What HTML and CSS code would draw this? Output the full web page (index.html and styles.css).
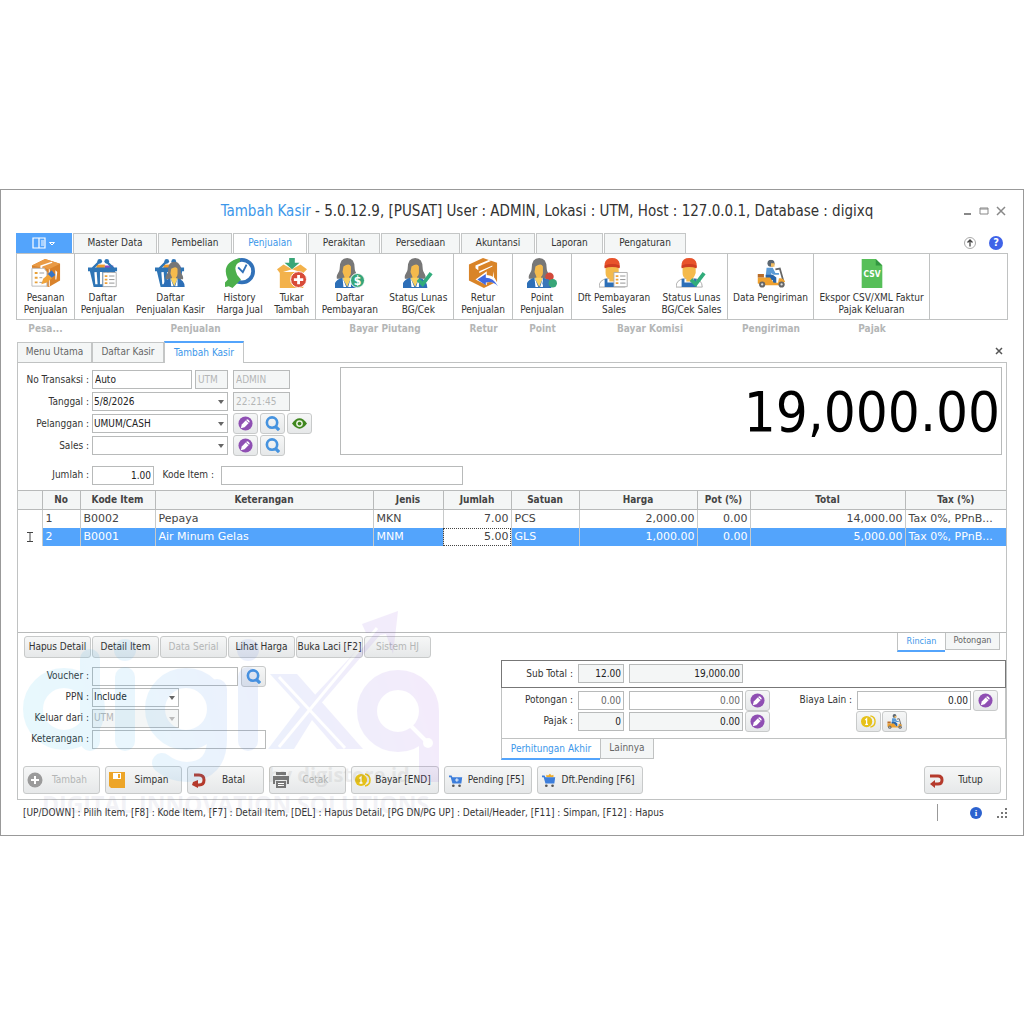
FILE: index.html
```html
<!DOCTYPE html>
<html lang="id">
<head>
<meta charset="utf-8">
<meta name="viewport" content="width=device-width, initial-scale=1">
<title>Tambah Kasir</title>
<link rel="stylesheet" href="styles.css">
</head>
<body>
<svg class="sprite" aria-hidden="true">
  <defs>
    <linearGradient id="brand" gradientUnits="userSpaceOnUse" x1="22" x2="440" y1="760" y2="640"><stop offset="0" stop-color="#22c4f2"/><stop offset=".3" stop-color="#35a9f4"/><stop offset=".55" stop-color="#4878ea"/><stop offset="1" stop-color="#a040d8"/></linearGradient>
  </defs>
  <symbol id="box" viewBox="0 0 32 32">
    <path fill="#d9822b" d="M1 8 15 1l16 5v18l-12 7L2 26z"/><path fill="#e99a45" d="M1 8 15 1l16 5-12 6z"/><path fill="#fff" d="m10 8 12-4 1 1-11 4v3l-2-1zM19 12h1v18h-1zM26 13l2 2-1 8h-1z"/>
    <path fill="#fff" stroke="#b9b9b9" d="M1 11h13l3 4v15H1z"/><path stroke="#e8a13a" stroke-width="2" d="M4 16h3m-3 5h3m-3 5h3"/><path stroke="#999" d="M9 16h5m-5 5h3m-3 5h5"/>
    <path fill="#f0a33a" d="m11 28 2-6 6-5 4 4-6 5z"/><path fill="#3474c8" d="m18 17 4-4 4 5-4 3z"/>
  </symbol>
  <symbol id="basket" viewBox="0 0 32 32">
    <path fill="#ee9b2e" d="M9 7h9v5H9z"/><path fill="#8b4bc0" d="M18 8h9v3h-9z"/><path fill="none" stroke="#2e75b6" stroke-width="2.500" d="M5 11 12 4m15 7L20 4"/><circle cx="12.500" cy="3.500" r="2.500" fill="#2e75b6"/><circle cx="20" cy="3.500" r="2.500" fill="#2e75b6"/>
    <path fill="#2e75b6" d="M0 10h31v4h-2l-3 17H6L2 14H0z"/><path stroke="#fff" stroke-width="2.500" d="m8 15 1 13m5-13v13m5-13v13m5-13-1 13"/>
  </symbol>
  <symbol id="list" viewBox="0 0 18 18"><path fill="#fff" stroke="#aaa" d="M1 1h15v16H1z"/><path stroke="#efa23a" stroke-width="2" d="M3 5h3M3 9h3m-3 4h3"/><path stroke="#888" d="M8 5h6M8 9h6m-6 4h6"/></symbol>
  <symbol id="woman" viewBox="0 0 32 32">
    <path fill="#777" d="M7 11Q7 0 15 0t8 11c0 5 4 6 3 11H4c-1-5 3-6 3-11z"/><path fill="#f4ba4c" d="M11 9q6-4 8 0v6q0 4-2 5v6h-5v-6l-2-5z"/>
    <path fill="#2d6fb7" d="M1 32q0-9 9-11l5 8 4-8q9 2 9 11z"/><path fill="#f8d061" d="m10 21 5 10 4-10z"/><path fill="#fff" d="m10 21 4 10h-3zm9 0-3 10h3z"/>
  </symbol>
  <symbol id="man" viewBox="0 0 32 32">
    <path fill="#fff" stroke="#aaa" d="M1 31q0-8 9-9h10q9 1 9 9z"/><path fill="#f4ba4c" d="M8 9h14v7q-2 6-4 6v3h-6v-3q-4-1-4-6z"/><path fill="#e8532b" d="M7 10V6q1-6 8-6t8 6v4l-8-2z"/><path fill="#cf3e22" d="M7 8q8-3 16 0v3q-8-3-16 0z"/>
    <path fill="#2d6fb7" d="M7 31V22h3v4h10v-4h3v9z"/>
  </symbol>
  <symbol id="check" viewBox="0 0 18 18"><path fill="none" stroke="#31ac7b" stroke-width="4" d="m2 9 5 5L16 2"/></symbol>
  <symbol id="scooter" viewBox="0 0 32 32">
    <circle cx="16" cy="4" r="4" fill="#5b6670"/><path fill="#f2bd62" d="M16 4h4v4h-4z"/><path fill="#5a9ad6" d="M11 9h7l3 6h4v2h-6l-3-2 1 4h-7z"/><path fill="#2864a8" d="M10 17h8l4 3v7h-4v-4h-8z"/>
    <path fill="none" stroke="#666" stroke-width="2" d="m21 11 5-1 4 14"/><path fill="#efa12f" d="M1 20h14l4 6h5l1-5q5-1 7 4l-7 4H10L1 27z"/><circle cx="6" cy="28" r="3.500" fill="#666"/><circle cx="28" cy="28" r="3.500" fill="#666"/><circle cx="6" cy="28" r="1.300" fill="#ddd"/><circle cx="28" cy="28" r="1.300" fill="#ddd"/><path fill="#b86c28" d="M1 16h7v4H1z"/>
  </symbol>
  <symbol id="pen" viewBox="0 0 16 16"><circle cx="8" cy="8" r="7.500" fill="#8f4fb3"/><path fill="#fff" d="m3 13 1-4 5-5q1-1 2 0l1 1q1 1 0 2l-5 5z"/><path fill="none" stroke="#8f4fb3" d="m8.500 4.500 3 3"/></symbol>
  <symbol id="search" viewBox="0 0 16 16"><circle cx="7.500" cy="7" r="5.500" fill="none" stroke="#4693df" stroke-width="2.800"/><path stroke="#4693df" stroke-width="3.500" d="m11 11 4 4"/></symbol>
  <symbol id="eye" viewBox="0 0 16 16"><path fill="#3f871f" d="M0 8q8-11 16 0-8 11-16 0z"/><circle cx="8" cy="8" r="3.600" fill="#e7f1df"/><circle cx="8" cy="8" r="2" fill="#3f871f"/></symbol>
  <symbol id="coin" viewBox="0 0 16 16"><path fill="none" stroke="#e6c118" stroke-width="1.500" d="M10 2q5 1 5 6t-5 6"/><circle cx="6" cy="8" r="6" fill="#e6c118"/><path fill="none" stroke="#fff" stroke-width="1.300" d="M4.500 6.500 6 5v6M4.500 11h3"/></symbol>
  <symbol id="cart" viewBox="0 0 16 16"><path fill="#3d7edb" d="M0 2h3l1 2h11l-1 7H4L2 4H0z"/><circle cx="5" cy="13.500" r="1.500" fill="#555"/><circle cx="12" cy="13.500" r="1.500" fill="#555"/></symbol>
</svg>

<main class="window">
  <header class="titlebar">
    <h1><span>Tambah Kasir</span> - 5.0.12.9, [PUSAT] User : ADMIN, Lokasi : UTM, Host : 127.0.0.1, Database : digixq</h1>
    <div class="controls">
      <button aria-label="Minimize"><svg viewBox="0 0 10 10"><path fill="none" stroke="#888" stroke-width="2" d="M2 8h7"/></svg></button>
      <button aria-label="Maximize"><svg viewBox="0 0 10 10"><path fill="none" stroke="#888" d="M1 2h8v6H1zM1 3h8"/></svg></button>
      <button aria-label="Close"><svg viewBox="0 0 10 10"><path fill="none" stroke="#888" stroke-width="1.500" d="m1 1 8 8m0-8-8 8"/></svg></button>
    </div>
  </header>

  <nav class="menu">
    <button class="file" aria-label="File"><svg viewBox="0 0 24 12"><path fill="none" stroke="#fff" stroke-width="1.200" d="M1 1h12v10H1zM7 1v10M9 4h3M9 6h3M9 8h3"/><path fill="none" stroke="#fff" d="M17.500 5.500h5L20 8z"/></svg></button>
    <a href="#" class="t84">Master Data</a><a href="#" class="t74">Pembelian</a><a href="#" class="t74 on">Penjualan</a><a href="#" class="t72">Perakitan</a><a href="#" class="t78">Persediaan</a><a href="#" class="t74">Akuntansi</a><a href="#" class="t66">Laporan</a><a href="#" class="t82">Pengaturan</a>
    <div class="help">
      <button aria-label="Ciutkan"><svg viewBox="0 0 14 14"><circle cx="7" cy="7" r="5.500" fill="none" stroke="#aaa"/><path fill="none" stroke="#444" stroke-width="1.300" d="M7 10.500V4M4.500 6.500 7 4l2.500 2.500"/></svg></button>
      <button aria-label="Bantuan" class="q">?</button>
    </div>
  </nav>

  <section class="ribbon">
    <div class="group g58"><div class="tools">
      <button><svg><use href="#box"/></svg>Pesanan<br>Penjualan</button></div><h2>Pesa...</h2></div>
    <div class="group g241"><div class="tools">
      <button><svg viewBox="0 0 32 32"><use href="#basket"/><use href="#list" x="15" y="14" width="17" height="18"/></svg>Daftar<br>Penjualan</button>
      <button><svg viewBox="0 0 32 32"><use href="#basket"/><use href="#woman" x="8" y="3" width="27" height="29"/></svg>Daftar<br>Penjualan Kasir</button>
      <button><svg viewBox="0 0 32 32"><circle cx="18" cy="14" r="12" fill="#fff" stroke="#3171b8" stroke-width="4"/><path fill="#4caf4b" d="M16 0v4Q8 8 13 18l4 5-9 9-4-2-4 1v-5l3-3Q-5 5 16 0z"/><path fill="none" stroke="#3171b8" stroke-width="2" d="m14 10 5 5 4-8"/></svg>History<br>Harga Jual</button>
      <button><svg viewBox="0 0 32 32"><path fill="#f3b24b" d="M3 15h25v17H3zM0 12l7-5 9 5-13 4zm16 0 9-5 7 5-4 4z"/><path fill="#39a678" d="M13 0h6v5h5l-8 7-8-7h5z"/><circle cx="23" cy="23" r="8.500" fill="#d84b38" stroke="#fff"/><path stroke="#fff" stroke-width="3" d="M18 23h10m-5-5v10"/></svg>Tukar<br>Tambah</button></div><h2>Penjualan</h2></div>
    <div class="group g138"><div class="tools">
      <button><svg viewBox="0 0 32 32"><use href="#woman" x="-2" width="32" height="32"/><circle cx="24" cy="24" r="7.500" fill="#36a579" stroke="#fff"/><text x="24" y="29" class="dollar">$</text></svg>Daftar<br>Pembayaran</button>
      <button><svg viewBox="0 0 32 32"><use href="#woman" x="-2" width="32" height="32"/><use href="#check" x="14" y="14" width="18" height="18"/></svg>Status Lunas<br>BG/Cek</button></div><h2>Bayar Piutang</h2></div>
    <div class="group g58"><div class="tools">
      <button><svg viewBox="0 0 32 32"><path fill="#d98428" d="m1 7 15-7 15 5v20l-14 7L1 24z"/><path fill="#fff" d="m8 8 14-6 3 1-14 6v4L8 11zM27 14l1 8-2 2zM12 14l14-6v1l-14 7z"/><path fill="#fff" d="m8 23 12-9v4q10 0 12 12-5-6-12-4v3z"/><path fill="#4169e1" d="m10 23 9-6v4q8 0 13 9-6-6-13-4v3z"/></svg>Retur<br>Penjualan</button></div><h2>Retur</h2></div>
    <div class="group g58"><div class="tools">
      <button><svg viewBox="0 0 32 32"><use href="#woman" x="-2" width="32" height="32"/><circle cx="24" cy="20" r="4.500" fill="#d2493a"/><circle cx="21" cy="27" r="4.500" fill="#3b77b8"/><circle cx="27.500" cy="27" r="4.500" fill="#37a577"/></svg>Point<br>Penjualan</button></div><h2>Point</h2></div>
    <div class="group g156"><div class="tools">
      <button><svg viewBox="0 0 32 32"><use href="#man" x="-1" width="32" height="32"/><use href="#list" x="15" y="14" width="17" height="18"/></svg>Dft Pembayaran<br>Sales</button>
      <button><svg viewBox="0 0 32 32"><use href="#man" x="-1" width="32" height="32"/><use href="#check" x="14" y="14" width="18" height="18"/></svg>Status Lunas<br>BG/Cek Sales</button></div><h2>Bayar Komisi</h2></div>
    <div class="group g86"><div class="tools">
      <button><svg viewBox="-1 -2 34 34"><use href="#scooter" width="32" height="32"/></svg>Data Pengiriman</button></div><h2>Pengiriman</h2></div>
    <div class="group g117"><div class="tools">
      <button><svg viewBox="0 0 32 32"><path fill="#57bf59" d="M5 1h15l7 7v24H5z"/><path fill="#339741" d="M20 1v7h7z"/><text x="16" y="20" class="csv">CSV</text></svg>Ekspor CSV/XML Faktur<br>Pajak Keluaran</button></div><h2>Pajak</h2></div>
    <div class="group rest"><div class="tools"></div></div>
  </section>

  <nav class="doctabs">
    <a href="#" class="t75">Menu Utama</a><a href="#" class="t72">Daftar Kasir</a><a href="#" class="on">Tambah Kasir</a>
    <button aria-label="Tutup tab"><svg viewBox="0 0 8 8"><path stroke="#555" stroke-width="1.500" d="m1 1 6 6m0-6-6 6"/></svg></button>
  </nav>

  <section class="panel">
    <div class="entry">
      <form class="fields">
        <div class="row"><label for="no">No Transaksi :</label><input id="no" class="w100" value="Auto"><input class="w33" aria-label="Gudang" value="UTM" disabled><input class="w57 second" aria-label="User" value="ADMIN" disabled></div>
        <div class="row"><label for="tgl">Tanggal :</label><span class="combo w136"><select id="tgl"><option>5/8/2026</option></select></span><input class="w57 second" aria-label="Jam" value="22:21:45" disabled></div>
        <div class="row"><label for="plg">Pelanggan :</label><span class="combo w136"><select id="plg"><option>UMUM/CASH</option></select></span><span class="acts"><button type="button" class="ib" aria-label="Ubah"><svg><use href="#pen"/></svg></button><button type="button" class="ib" aria-label="Cari"><svg><use href="#search"/></svg></button><button type="button" class="ib" aria-label="Lihat"><svg><use href="#eye"/></svg></button></span></div>
        <div class="row"><label for="sales">Sales :</label><span class="combo w136"><select id="sales"><option></option></select></span><span class="acts"><button type="button" class="ib" aria-label="Ubah"><svg><use href="#pen"/></svg></button><button type="button" class="ib" aria-label="Cari"><svg><use href="#search"/></svg></button></span></div>
      </form>
      <output class="display">19,000.00</output>
    </div>
    <form class="row qty"><label for="jml">Jumlah :</label><input id="jml" class="w62 num" value="1.00"><label class="code" for="kode">Kode Item :</label><input id="kode" class="w242"></form>

    <div class="gridbox">
      <table>
        <colgroup><col class="c24"><col class="c38"><col class="c75"><col><col class="c70"><col class="c68"><col class="c68"><col class="c118"><col class="c53"><col class="c155"><col class="c100"></colgroup>
        <thead><tr><th></th><th>No</th><th>Kode Item</th><th>Keterangan</th><th>Jenis</th><th>Jumlah</th><th>Satuan</th><th>Harga</th><th>Pot (%)</th><th>Total</th><th>Tax (%)</th></tr></thead>
        <tbody>
          <tr><td></td><td>1</td><td>B0002</td><td>Pepaya</td><td>MKN</td><td class="num">7.00</td><td>PCS</td><td class="num">2,000.00</td><td class="num">0.00</td><td class="num">14,000.00</td><td>Tax 0%, PPnB...</td></tr>
          <tr class="sel"><td class="mark"><svg viewBox="0 0 6 10"><path fill="none" stroke="#444" d="M0 .5h6M3 1v8M0 9.500h6"/></svg></td><td>2</td><td>B0001</td><td>Air Minum Gelas</td><td>MNM</td><td class="num focus">5.00</td><td>GLS</td><td class="num">1,000.00</td><td class="num">0.00</td><td class="num">5,000.00</td><td>Tax 0%, PPnB...</td></tr>
        </tbody>
      </table>
    </div>

    <div class="toolbar">
      <div class="btns"><button class="btn">Hapus Detail</button><button class="btn">Detail Item</button><button class="btn" disabled>Data Serial</button><button class="btn">Lihat Harga</button><button class="btn">Buka Laci [F2]</button><button class="btn" disabled>Sistem HJ</button></div>
      <nav class="subtabs"><a href="#" class="on">Rincian</a><a href="#">Potongan</a></nav>
    </div>

    <div class="summary">
      <form class="fields extra">
        <div class="row"><label for="vc">Voucher :</label><input id="vc" class="w146"><button type="button" class="ib" aria-label="Cari voucher"><svg><use href="#search"/></svg></button></div>
        <div class="row"><label for="ppn">PPN :</label><span class="combo w87"><select id="ppn"><option>Include</option></select></span></div>
        <div class="row"><label for="kel">Keluar dari :</label><span class="combo w87 off"><select id="kel" disabled><option>UTM</option></select></span></div>
        <div class="row"><label for="ket">Keterangan :</label><input id="ket" class="w174"></div>
      </form>
      <div class="totals">
        <div class="sub row"><label for="st">Sub Total :</label><input id="st" class="w46 num ro" value="12.00" readonly><input class="w114 num ro" aria-label="Sub total" value="19,000.00" readonly></div>
        <div class="calc">
          <div class="row"><label for="pot">Potongan :</label><input id="pot" class="w46 num soft" value="0.00"><input class="w114 num soft" aria-label="Nilai potongan" value="0.00"><button class="ib" aria-label="Ubah potongan"><svg><use href="#pen"/></svg></button><span class="right"><label for="by">Biaya Lain :</label><input id="by" class="w114 num" value="0.00"><button class="ib" aria-label="Ubah biaya"><svg><use href="#pen"/></svg></button></span></div>
          <div class="row"><label for="pj">Pajak :</label><input id="pj" class="w46 num ro" value="0" readonly><input class="w114 num ro" aria-label="Nilai pajak" value="0.00" readonly><button class="ib" aria-label="Ubah pajak"><svg><use href="#pen"/></svg></button><span class="right pair"><button class="ib" aria-label="Bayar"><svg><use href="#coin"/></svg></button><button class="ib" aria-label="Pengiriman"><svg><use href="#scooter"/></svg></button></span></div>
        </div>
        <nav class="subtabs wide"><a href="#" class="on">Perhitungan Akhir</a><a href="#">Lainnya</a></nav>
      </div>
    </div>

    <div class="actions">
      <button class="btn big" disabled><svg viewBox="0 0 16 16"><circle cx="8" cy="8" r="7.500" fill="#9b9b9b"/><path stroke="#fff" stroke-width="2" d="M4 8h8M8 4v8"/></svg><span>Tambah</span></button>
      <button class="btn big"><svg viewBox="0 0 16 16"><path fill="#eda528" d="M0 0h16v16H2l-2-2z"/><path fill="#fff" d="M4 1h8v6H4z"/><path fill="#eda528" d="M9 2h2v4H9z"/></svg><span>Simpan</span></button>
      <button class="btn big"><svg viewBox="0 0 16 16"><path fill="none" stroke="#b53a2c" stroke-width="3" d="M3 3h5q5 0 5 5t-5 5H6"/><path fill="#b53a2c" d="M7 8v8l-6-3 1-3z"/></svg><span>Batal</span></button>
      <button class="btn big" disabled><svg viewBox="0 0 16 16"><path fill="#777" d="M3 0h10v3H3zM0 4h16v8h-2V8H2v4H0zm3 5h10v7H3z"/><path stroke="#fff" d="M5 11.500h6m-6 2h6"/></svg><span>Cetak</span></button>
      <button class="btn big w89"><svg><use href="#coin"/></svg><span>Bayar [END]</span></button>
      <button class="btn big w89"><svg viewBox="-1 -2 18 18"><use href="#cart" width="16" height="16"/><path stroke="#fff" d="M9 5v4M7 7h4"/></svg><span>Pending [F5]</span></button>
      <button class="btn big w106"><svg viewBox="-1 -2 18 18"><path fill="#efad2c" d="M5 4V1l2 1 2-2 2 2 2-1v3z"/><use href="#cart" width="16" height="16"/></svg><span>Dft.Pending [F6]</span></button>
      <button class="btn big last"><svg viewBox="0 0 16 16"><path fill="none" stroke="#b53a2c" stroke-width="3" d="M2 4h8q4 0 4 4t-4 4H6"/><path fill="#b53a2c" d="M7 8v8l-5-4z"/></svg><span>Tutup</span></button>
    </div>

    <svg class="watermark" viewBox="22 609 420 210" aria-hidden="true">
      <g fill="none" stroke="url(#brand)" stroke-width="20">
        <g stroke-linecap="round">
          <circle cx="64" cy="710" r="31"/><path d="M90 660v82M125 678v64M248 678v64"/>
          <circle cx="186" cy="710" r="31"/><path d="M217 690v50q0 32-30 33-14 0-25-9"/>
        </g>
        <circle cx="398" cy="712" r="31"/><path d="M429 712v71"/>
      </g>
      <g fill="url(#brand)">
        <circle cx="125" cy="651" r="11"/><circle cx="248" cy="651" r="11"/>
        <path d="M270 675h27l66 75h-26l-25-29-18 29h-26l32-42z"/>
        <path d="m318 708 62-72 6-1 7 20 5-43-36 13 4 9 8-1-61 65z"/>
      </g>
      <path stroke="#fff" stroke-width="4" d="m411 727 17 17"/><circle cx="428" cy="744" r="5" fill="#fff"/>
      <path fill="none" stroke="#fff" stroke-width="3" d="m279 678 66 71M279 748l98-119"/>
      <text class="by" x="268" y="783">by digistore.id</text>
      <text class="tag" x="42" y="814">DIGITAL INNOVATION SOLUTIONS</text>
    </svg>
  </section>

  <footer class="status">
    <p>[UP/DOWN] : Pilih Item, [F8] : Kode Item, [F7] : Detail Item, [DEL] : Hapus Detail, [PG DN/PG UP] : Detail/Header, [F11] : Simpan, [F12] : Hapus</p>
    <div class="tray"><span class="info">i</span></div>
    <svg class="grip" viewBox="0 0 12 12"><path fill="#777" d="M9 1h2v2H9zM9 5h2v2H9zM5 5h2v2H5zM9 9h2v2H9zM5 9h2v2H5zM1 9h2v2H1z"/></svg>
  </footer>
</main>
</body>
</html>
```
FILE: styles.css
```css
* { box-sizing: border-box; }
body {
  margin: 0;
  min-height: 100vh;
  display: flex;
  flex-direction: column;
  justify-content: center;
  background: #fff;
  color: #333;
  font: 10px/12px "DejaVu Sans Condensed", "DejaVu Sans", sans-serif;
}
h1, h2, p { margin: 0; }
a { color: inherit; text-decoration: none; }
button, input, select { font: inherit; color: inherit; margin: 0; padding: 0; }
button { border: 0; background: none; }
svg { display: block; }
.sprite { position: absolute; width: 0; height: 0; }

.window { border: 1px solid #999; background: #fff; padding: 0 15px; }

.titlebar { display: flex; align-items: center; height: 43px; }
.titlebar h1 { flex: 1; padding-left: 116px; text-align: center; font-size: 15px; line-height: 18px; font-weight: 400; white-space: nowrap; }
.titlebar h1 span { color: #3c97ea; }
.controls { display: flex; gap: 7px; padding-right: 2px; }
.controls button { width: 10px; height: 10px; }

.menu { display: flex; align-items: stretch; height: 20px; }
.menu a, .doctabs a { display: flex; align-items: center; justify-content: center; border: 1px solid #c4c6c6; border-bottom: 0; background: #f4f6f6; margin-right: 1px; }
.menu .file { width: 56px; background: #53a4fc; margin-right: 1px; display: flex; align-items: center; justify-content: center; }
.file svg { width: 24px; height: 12px; }
.menu .on { background: #fff; color: #3c97ea; }
.t84 { width: 84px; } .t74 { width: 74px; } .t75 { width: 75px; } .t72 { width: 72px; } .t78 { width: 79px; } .t66 { width: 67px; } .t82 { width: 82px; }
.help { margin-left: auto; padding-right: 5px; display: flex; align-items: center; gap: 12px; }
.help svg { width: 14px; height: 14px; }
.help .q { width: 14px; height: 14px; border-radius: 50%; background: #3f63e8; color: #fff; font-weight: 700; font-size: 11px; line-height: 14px; }

.ribbon { display: flex; }
.group .tools { display: flex; align-items: flex-start; height: 67px; border: 1px solid #c0c2c2; border-left: 0; padding-top: 4px; }
.group:first-child .tools { border-left: 1px solid #c0c2c2; }
.tools button { flex: 1 1 auto; white-space: nowrap; }
.tools svg { width: 30px; height: 30px; margin: 0 auto 4px; }
.group h2 { font-size: 10px; line-height: 18px; color: #b4b6b6; text-align: center; }
.dollar { fill: #fff; font-size: 13px; font-weight: 700; text-anchor: middle; }
.csv { fill: #fff; font-size: 9px; font-weight: 700; text-anchor: middle; }
.g58 { width: 59px; } .g241 { width: 241px; } .g138 { width: 138px; } .g156 { width: 156px; } .g86 { width: 86px; } .g117 { width: 116px; }
.rest { flex: 1; }

.doctabs { display: flex; align-items: flex-end; height: 24px; padding: 0 1px; color: #666; }
.doctabs a { height: 20px; margin: 0; }
.doctabs .on { width: 80px; height: 22px; margin-bottom: -1px; z-index: 1; border-top: 2px solid #53a4fc; background: #fff; color: #3c97ea; }
.doctabs button { width: 8px; height: 8px; margin: 0 4px 7px auto; }

.panel { position: relative; border: 1px solid #c0c2c2; margin: 0 1px; padding-bottom: 5px; }
.entry { display: flex; padding: 4px 4px 0 0; gap: 28px; }
.row { display: flex; align-items: center; height: 22px; }
.row label { width: 71px; margin-right: 3px; text-align: right; white-space: nowrap; }
.entry .fields { padding-top: 2px; }
.row input, .combo { height: 19px; border: 1px solid #b8baba; background: #fff; flex: none; }
.row input { padding: 0 2px; color: #222; }
.row input:disabled { background: #f4f6f6; color: #b4b6b6; }
.num { text-align: right; }
.row .ro { background: #f4f6f6; }
.row .soft { color: #666; }
.combo { position: relative; }
.combo select { appearance: none; width: 100%; height: 100%; border: 0; background: none; padding: 0 1px; color: #222; opacity: 1; }
.combo::after { content: ""; position: absolute; right: 3px; top: 7px; border: 3px solid transparent; border-top: 4px solid #666; border-bottom: 0; pointer-events: none; }
.off { background: #f4f6f6; }
.combo.off select { color: #b4b6b6; }
.combo.off::after { border-top-color: #bbb; }
.w33 { width: 33px; margin-left: 3px; } .w46 { width: 46px; } .w57 { width: 57px; } .w62 { width: 62px; } .w87 { width: 87px; } .w100 { width: 100px; } .w114 { width: 114px; } .w136 { width: 136px; } .w146 { width: 146px; } .w174 { width: 174px; } .w242 { width: 242px; }
.second, .acts { margin-left: 5px; }
.acts { display: flex; gap: 2px; }
.ib, .btn { border: 1px solid #c8caca; border-radius: 3px; background: linear-gradient(#f6f7f7, #e6e8e9); }
.ib { width: 25px; height: 21px; display: flex; align-items: center; justify-content: center; flex: none; }
.ib svg { width: 15px; height: 15px; }
.qty { height: 33px; padding-top: 4px; }
.row .code { width: 60px; margin-right: 7px; }
.display { flex: 1; height: 88px; border: 1px solid #b8baba; color: #000; text-align: right; font-size: 56px; line-height: 88px; padding-right: 1px; }

.gridbox { border-top: 1px solid #b8baba; border-bottom: 1px solid #b8baba; height: 143px; }
table { width: 100%; border-collapse: collapse; table-layout: fixed; font: 11px/13px "DejaVu Sans", sans-serif; color: #444; }
th { height: 19px; padding: 0; font: 700 10px/12px "DejaVu Sans Condensed", sans-serif; background: #f4f6f6; border-right: 1px solid #b8baba; border-bottom: 1px solid #b8baba; }
td { height: 18px; padding: 0 2px 0 3px; border-right: 1px solid #c8caca; white-space: nowrap; overflow: hidden; }
th:last-child, td:last-child { border-right: 0; }
.sel td { background: #53a4fc; color: #fff; }
.sel .mark { background: #fff; }
.mark svg { width: 6px; height: 10px; margin: 0 auto; }
.sel .focus { background: #fff; color: #444; outline: 1px dotted #444; outline-offset: -1px; }
.c24 { width: 24px; } .c38 { width: 38px; } .c75 { width: 75px; } .c70 { width: 70px; } .c68 { width: 68px; } .c118 { width: 118px; } .c53 { width: 53px; } .c155 { width: 155px; } .c100 { width: 101px; }

.toolbar { display: flex; justify-content: space-between; align-items: flex-start; padding: 0 6px; }
.btns { display: flex; gap: 1px; padding-top: 3px; }
.btn { width: 67px; height: 22px; white-space: nowrap; color: #333; }
.btn:disabled { color: #b4b6b6; }
.subtabs { display: flex; align-items: flex-start; font-size: 9px; color: #666; }
.subtabs a { width: 55px; height: 17px; line-height: 15px; text-align: center; border: 1px solid #c0c2c2; border-top: 0; background: #f4f6f6; }
.subtabs .on { width: 48px; height: 19px; line-height: 17px; border-right: 0; border-bottom: 2px solid #53a4fc; color: #3c97ea; background: #fff; }

.summary { display: flex; justify-content: space-between; padding-top: 2px; }
.extra { padding-top: 6px; }
.extra .row { height: 21px; }
.extra .ib { margin-left: 3px; }
.totals { width: 505px; }
.sub { height: 28px; border: 1px solid #777; }
.totals .row label { margin-right: 5px; }
.row .w46 + .w114 { margin-left: 5px; }
.calc { border: 1px solid #c0c2c2; border-top: 0; padding: 2px 7px 6px 0; }
.calc .row { height: 21px; }
.w114 + .ib { margin-left: 2px; }
.right { margin-left: auto; display: flex; align-items: center; }
.right.pair { width: 142px; gap: 1px; }
.wide { font-size: 10px; }
.wide .on { width: 99px; height: 21px; line-height: 19px; }
.wide a { width: 54px; height: 20px; line-height: 18px; }

.actions { display: flex; gap: 5px; padding: 6px 5px 0; }
.big { width: 77px; height: 28px; padding: 0 3px; display: flex; align-items: center; }
.big svg { width: 16px; height: 16px; flex: none; }
.big span { flex: 1; text-align: center; }
.w89 { width: 88px; } .w106 { width: 106px; }
.last { margin-left: auto; }

.watermark { position: absolute; left: 4px; top: 245px; width: 420px; height: 210px; opacity: .1; pointer-events: none; overflow: visible; }
.by { font: 700 20px "Open Sans", sans-serif; fill: #666; }
.tag { font: 700 23px "Open Sans", sans-serif; fill: #88a; }

.status { display: flex; align-items: center; height: 35px; padding: 0 0 9px 7px; }
.status p { flex: 1; white-space: nowrap; }
.tray { display: flex; align-items: center; width: 59px; height: 17px; padding-left: 32px; border-left: 1px solid #999; }
.info { display: block; width: 12px; height: 12px; border-radius: 50%; background: #2c62cf; color: #fff; text-align: center; font: 700 9px/12px "Liberation Serif", serif; }
.grip { width: 12px; height: 12px; }
```
